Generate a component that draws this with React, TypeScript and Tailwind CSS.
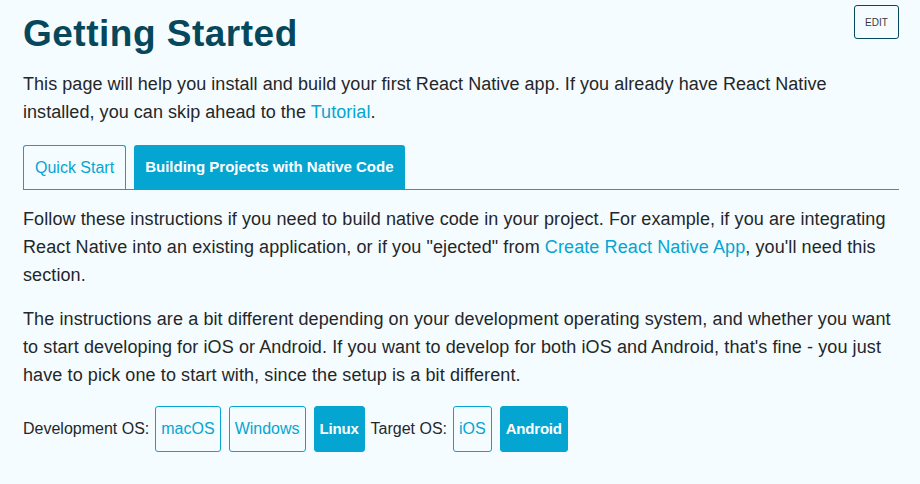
import React from "react";

const link = "text-[#05a5d1]";

function OsButton({ label, active }: { label: string; active?: boolean }) {
  return (
    <button
      className={
        active
          ? "h-[46px] px-[5px] rounded-[3px] border border-[#05a5d1] bg-[#05a5d1] text-white font-bold text-[15px] tracking-[-0.2px]"
          : "h-[46px] px-[5px] rounded-[3px] border border-[#05a5d1] bg-transparent text-[#05a5d1] text-[16px]"
      }
    >
      {label}
    </button>
  );
}

export default function App() {
  return (
    <div
      className="w-full h-[484px] bg-[#f5fcff] pl-[23px] pr-[21px] text-[#242729] overflow-hidden"
      style={{ fontFamily: '"Liberation Sans", Arial, sans-serif' }}
    >
      {/* header */}
      <div className="flex justify-between items-start">
        <h1 className="pt-[12px] text-[37px] leading-[44px] font-bold tracking-[0.5px] text-[#05485c]">
          Getting Started
        </h1>
        <button className="mt-[5px] w-[45px] h-[34px] rounded-[3px] border border-[#05485c] text-[10px] text-[#393939]">
          EDIT
        </button>
      </div>

      <p className="mt-[14px] text-[18px] leading-[28px] tracking-[0.05px] whitespace-nowrap">
        This page will help you install and build your first React Native app. If you already have React Native
        <br />
        installed, you can skip ahead to the <span className={link}>Tutorial</span>.
      </p>

      {/* tabs */}
      <div className="mt-[19px] flex gap-[8px] border-b border-[#05a5d1]">
        <div className="h-[44px] px-[11px] flex items-center rounded-t-[3px] border border-b-0 border-[#05a5d1] text-[16px] text-[#05a5d1]">
          Quick Start
        </div>
        <div className="h-[44px] px-[11px] flex items-center rounded-t-[3px] bg-[#05a5d1] text-[15px] font-bold text-white">
          Building Projects with Native Code
        </div>
      </div>

      <p className="mt-[15px] text-[18px] leading-[28px] tracking-[0.1px] whitespace-nowrap">
        Follow these instructions if you need to build native code in your project. For example, if you are integrating
        <br />
        React Native into an existing application, or if you "ejected" from{" "}
        <span className={link}>Create React Native App</span>, you'll need this
        <br />
        section.
      </p>

      <p className="mt-[16px] text-[18px] leading-[28px] tracking-[0.1px] whitespace-nowrap">
        The instructions are a bit different depending on your development operating system, and whether you want
        <br />
        to start developing for iOS or Android. If you want to develop for both iOS and Android, that's fine - you just
        <br />
        have to pick one to start with, since the setup is a bit different.
      </p>

      {/* os selectors */}
      <div className="mt-[17px] flex items-center text-[16px]">
        <span className="mr-[6px]">Development OS:</span>
        <div className="flex gap-[8px]">
          <OsButton label="macOS" />
          <OsButton label="Windows" />
          <OsButton label="Linux" active />
        </div>
        <span className="mx-[6px]">Target OS:</span>
        <div className="flex gap-[8px]">
          <OsButton label="iOS" />
          <OsButton label="Android" active />
        </div>
      </div>
    </div>
  );
}
